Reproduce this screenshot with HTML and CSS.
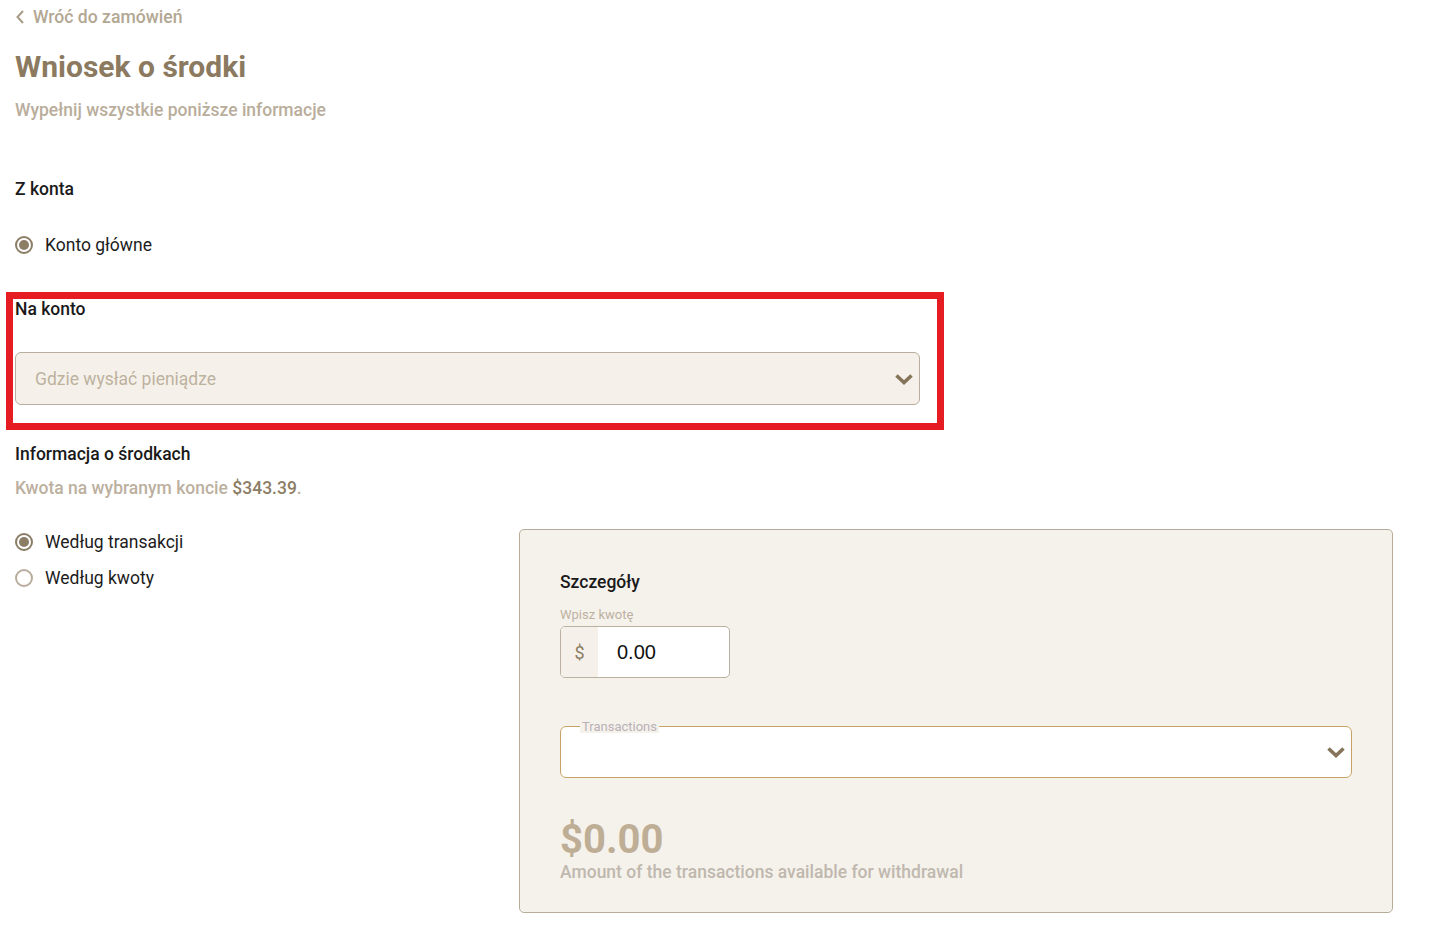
FILE: index.html
```html
<!DOCTYPE html>
<html lang="pl">
<head>
<meta charset="utf-8">
<title>Wniosek o środki</title>
<link rel="stylesheet" href="styles.css">
</head>
<body>
<div class="page">
  <a class="back" href="#">
    <svg class="back-icon" width="10" height="16" viewBox="0 0 10 16"><path d="M8 2 L2.5 8 L8 14" fill="none" stroke="#a89c89" stroke-width="2"/></svg>
    <span>Wróć do zamówień</span>
  </a>
  <h1 class="title">Wniosek o środki</h1>
  <p class="subtitle">Wypełnij wszystkie poniższe informacje</p>

  <h2 class="label from-label">Z konta</h2>
  <label class="radio radio-main"><span class="dot checked"></span><span>Konto główne</span></label>

  <div class="highlight">
    <h2 class="label">Na konto</h2>
    <div class="select">
      <span class="placeholder">Gdzie wysłać pieniądze</span>
      <svg class="chev" width="20" height="14" viewBox="0 0 20 14"><path d="M2.5 3.5 L10 10.5 L17.5 3.5" fill="none" stroke="#85745a" stroke-width="3.6"/></svg>
    </div>
  </div>

  <h2 class="label info-label">Informacja o środkach</h2>
  <p class="balance">Kwota na wybranym koncie <strong>$343.39</strong>.</p>

  <div class="row">
    <div class="options">
      <label class="radio"><span class="dot checked"></span><span>Według transakcji</span></label>
      <label class="radio"><span class="dot"></span><span>Według kwoty</span></label>
    </div>
    <div class="card">
      <h2 class="label">Szczegóły</h2>
      <div class="small-label">Wpisz kwotę</div>
      <div class="amount-group">
        <span class="prefix">$</span>
        <span class="amount">0.00</span>
      </div>
      <fieldset class="tx">
        <legend>Transactions</legend>
        <svg class="chev" width="20" height="14" viewBox="0 0 20 14"><path d="M2.5 3.5 L10 10.5 L17.5 3.5" fill="none" stroke="#85745a" stroke-width="3.6"/></svg>
      </fieldset>
      <div class="total">$0.00</div>
      <div class="total-note">Amount of the transactions available for withdrawal</div>
    </div>
  </div>
</div>
</body>
</html>
```

FILE: styles.css
```css
* { box-sizing: border-box; }
html, body { margin: 0; padding: 0; background: #fff; }
body { font-family: Roboto, "Noto Sans", sans-serif; color: #1c1c1c; }
.page { padding: 0 41px 0 15px; }

.back {
  display: flex; align-items: center; gap: 8px;
  margin-top: 7px; height: 20px; line-height: 20px;
  font-size: 17.6px; font-weight: 500; color: #b3a793; text-decoration: none;
}
.back-icon { display: block; }

.title {
  margin: 22px 0 0; font-size: 30px; line-height: 36px; font-weight: 700; color: #8b7a5f;
}
.subtitle {
  margin: 14px 0 0; font-size: 17.5px; line-height: 22px; font-weight: 500; color: #b9ad9b;
}

.label {
  margin: 0; font-size: 17.5px; line-height: 22px; font-weight: 500; color: #1a1a1a;
}
.from-label { margin-top: 57px; }

.radio {
  display: flex; align-items: center; gap: 12px;
  font-size: 17.5px; line-height: 22px; color: #1c1c1c;
}
.radio-main { margin-top: 34px; }
.dot {
  width: 18px; height: 18px; border-radius: 50%;
  border: 2px solid #b8ad9c; flex: 0 0 18px; position: relative;
}
.dot.checked { border-color: #8c7d65; }
.dot.checked::after {
  content: ""; position: absolute; left: 2px; top: 2px;
  width: 10px; height: 10px; border-radius: 50%; background: #8c7d65;
}

.highlight {
  margin: 36px 0 0 -9px; width: 938px;
  border: 7px solid #e51d22;
  padding: 0 17px 18px 2px;
}
.highlight .label { line-height: 20px; }
.select {
  margin-top: 33px; height: 53px;
  background: #f5f1ea; border: 1px solid #b9ad9d; border-radius: 6px;
  display: flex; align-items: center; justify-content: space-between;
  padding: 0 5px 0 19px;
}
.placeholder { font-size: 17.5px; color: #bdb1a0; }
.chev { display: block; }

.info-label { margin-top: 13px; }
.balance {
  margin: 12px 0 0; font-size: 17.5px; line-height: 22px; font-weight: 500; color: #bcb0a0;
}
.balance strong { color: #8c7d65; font-weight: 500; }

.row { display: flex; margin-top: 30px; }
.options {
  flex: 0 0 504px; display: flex; flex-direction: column; gap: 14px; padding-top: 2px;
}
.card {
  flex: 1; height: 384px;
  background: #f5f2ec; border: 1px solid #b8ab99; border-radius: 5px;
  padding: 41px 40px 0 40px;
}
.small-label {
  margin-top: 14px; font-size: 13px; line-height: 16px; color: #bdb1a2;
}
.amount-group {
  margin-top: 3px; width: 170px; height: 52px;
  border: 1px solid #bcb0a0; border-radius: 5px; overflow: hidden;
  display: flex; background: #fff;
}
.prefix {
  width: 37px; background: #f5f1ea; color: #8c7d65;
  font-size: 18px; display: flex; align-items: center; justify-content: center;
}
.amount {
  padding-left: 19px; display: flex; align-items: center;
  font-family: "Liberation Sans", Arial, sans-serif; font-size: 20px; color: #111;
}

.tx {
  margin: 42px 0 0; padding: 0 5px 0 19px; height: 58px;
  border: 1px solid #c9a365; border-radius: 6px; background: #fff;
  display: flex; align-items: center; justify-content: flex-end;
  min-width: 0;
}
.tx legend {
  padding: 0 2px; margin-left: 0; font-size: 13px; line-height: 13px; color: #b9b0b5;
  background: #f5f2ec;
}
.tx .chev { margin-top: -6px; }

.total {
  margin-top: 40px; font-size: 40px; line-height: 44px; font-weight: 700; color: #bfae96;
}
.total-note {
  margin-top: -1px; font-size: 17.5px; line-height: 22px; font-weight: 500; color: #c0b8ae;
}
```
